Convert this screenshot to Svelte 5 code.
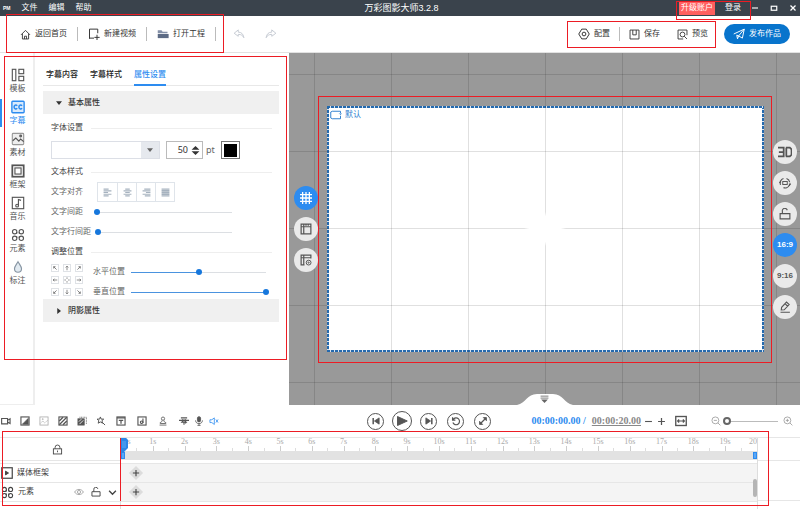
<script>
  const icons = {
    home: '<path d="M1.5 8.5 8 2l6.500 6.500M3.500 7v7.500h9V7M6.500 14.500V10.500h3v4"/>',
    create: '<path d="M8 13.500H2v-12h11V7M2 13.500v1M12 9v7M8.500 12.500h7"/>',
    folder: '<path d="M1 3h5l1.500 2H14v2H1z" fill="#8490a8" stroke="none"/><path d="M1 8h14.500v5.500H1z" fill="#5d6b85" stroke="none"/>',
    undo: '<path d="M7 2.500 1.500 7 7 11V8.500c4 0 6 1.500 7.500 4.500C14 8 11 5.500 7 5.500z"/>',
    redo: '<path d="M9 2.500 14.500 7 9 11V8.500c-4 0-6 1.500-7.500 4.500C2 8 5 5.500 9 5.500z"/>',
    gear: '<path d="M5 1.500h6L15 8l-4 6.500H5L1 8z"/><circle cx="8" cy="8" r="2.500"/>',
    save: '<path d="M1.500 1.500h13v13h-13zM5.500 1.500v7h5v-7"/>',
    preview: '<path d="M14.500 9V1.500h-13v13H9"/><circle cx="8" cy="8" r="3.500"/><path d="m10.500 10.500 4 4"/>',
    send: '<path d="M1 8 15 1.500 12.500 13.500 7.500 10.500 15 1.500M7.500 10.500 6 14.500 5 9.500z"/>',
    template: '<rect x="1.500" y="1.500" width="4" height="13"/><rect x="9" y="1.500" width="5.500" height="5"/><rect x="9" y="9.500" width="5.500" height="5"/>',
    caption: '<rect x="1" y="1.500" width="14" height="13" rx="1" fill="#d9eafc" stroke-width="1.600"/><path stroke-width="1.700" d="M7.200 6.500C5.500 5 3.500 6 3.500 8s2 3 3.700 1.500M12.700 6.500C11 5 9 6 9 8s2 3 3.700 1.500"/>',
    material: '<rect x="1.500" y="1.500" width="13" height="13" rx="1" fill="#eee" stroke="#999"/><path d="m2 10 3.500-3L9 10.500 11 8l3.500 3"/><circle cx="11" cy="4.500" r="1"/>',
    frame: '<rect x="1.500" y="1.500" width="13" height="13" stroke-width="2"/><rect x="4.500" y="4.500" width="7" height="7"/>',
    music: '<rect x="1.500" y="1.500" width="13" height="13"/><path d="M8.500 11V4l3 1"/><circle cx="7" cy="11" r="1.600"/>',
    element: '<circle cx="4.200" cy="4.200" r="2.500"/><circle cx="11.800" cy="4.200" r="2.500"/><circle cx="4.200" cy="11.800" r="2.500"/><circle cx="11.800" cy="11.800" r="2.500"/><path d="M6.500 4.500V6.700M9.500 4.500v2.200M6.500 11.500V9.300M9.500 11.500V9.300"/>',
    drop: '<path d="M8 2c2 3.500 4 5.500 4 8a4 4 0 0 1-8 0c0-2.500 2-4.500 4-8z" fill="#e1eaf1" stroke="#8795a3"/>',
    hash: '<path stroke-width="1.700" d="M3.500 0v16M8 0v16M12.500 0v16M0 3.500h16M0 8h16M0 12.500h16"/>',
    ruler: '<path stroke-width="1.600" d="M1.500 1.500h13v13h-13zM5 2v12M2 5h12M8 2v1.500M11 2v1.500"/>',
    rulerSet: '<path stroke-width="1.600" d="M14.500 6V1.500h-13v13H6M5 2v12M2 5h12"/><circle cx="11.500" cy="11.500" r="3.200"/><circle cx="11.500" cy="11.500" r=".8"/>',
    threeD: '<path stroke-width="2" d="M0 3h6.500v10H0M1 8h5.500M9.500 3v10M9 3h4.500L15.500 5v6l-2 2H9"/>',
    rotate: '<path stroke-width="1.500" d="M2 10.500A6.500 6.500 0 0 1 6 2M10 2a6.500 6.500 0 0 1 4.300 5M14 10.500A6.500 6.500 0 0 1 6 14.200M2 4.500V7H0M14 12V9.500h2"/><rect x="5" y="6" width="6" height="4"/>',
    unlock: '<path d="M1.500 7.500h13v7h-13zM4.500 7.500V4.500a3 3 0 0 1 6.500-1.500" stroke-width="1.500"/>',
    lock: '<rect x="2" y="7" width="12" height="7.500"/><path d="M4.500 7V5a3.500 3.500 0 0 1 7 0v2M8 9.500v2.500"/>',
    pen: '<path stroke-width="1.500" d="m3 12 .5-3.500 6.500-7 3.500 3.200-6.500 7zM8 3.500 11.500 7M2 15h12.500"/>',
    camera: '<path stroke-width="1.800" d="M1 4h9.500v8.500H1zM10.500 7l4-2.500v7.500l-4-2.500"/>',
    mask: '<rect x="1.500" y="1.500" width="13" height="13" stroke-width="1.800"/><path d="M13 4v9H4z" fill="currentColor"/>',
    picture: '<rect x="1.500" y="1.500" width="13" height="13"/><path stroke-dasharray="2 1" d="m2 12 4-4 3 3 5-4"/><circle cx="6" cy="5" r=".8"/>',
    stripes: '<rect x="1.500" y="1.500" width="13" height="13" stroke-width="1.800"/><path stroke-width="2" d="M2 8 8 2M2 14 14 2M8 14l6-6"/>',
    stack: '<rect x="1.500" y="4.500" width="10" height="10" fill="currentColor"/><path d="M4 2h11v11" stroke-dasharray="1.500 1"/><path stroke="#fff" d="M3 9 7 5M4 13l6-6"/>',
    star: '<path d="M7 1.500 8.300 5h4L9.500 7.500l1 4L7 9.500l-3.500 2 1-4L1.700 5h4zM10.500 10.500l4 4" stroke-width="1.600"/>',
    text: '<rect x="1.500" y="1.500" width="13" height="13" stroke-width="1.800"/><path stroke-width="2" d="M1.500 3h13M4.500 7h7M8 7v5.500"/>',
    note: '<rect x="1.500" y="1.500" width="13" height="13" stroke-width="1.800"/><path stroke-width="1.800" d="M9.500 11V4"/><circle cx="7.500" cy="10" r="2" stroke-width="1.800"/>',
    person: '<circle cx="8" cy="4.200" r="2.600"/><path d="M6.500 7c0 2-1 3-3 3.500v1.500h9v-1.500c-2-.5-3-1.500-3-3.500M2.500 14.500h11"/>',
    wave: '<path stroke-width="1.800" d="M0 7h16M3 3h10M5.500 5v5M8 5v9M10.500 5v7M3 10h10"/>',
    mic: '<rect x="5.500" y="1" width="5" height="8.500" rx="2.500" fill="currentColor"/><path d="M2.500 7c0 7 11 7 11 0M8 12v3M5.500 15h5"/>',
    mute: '<path d="M1.500 6h3L8.500 3v10.500L4.500 10.500h-3zM11 5.500l3.500 5M14.500 5.500l-3.500 5"/>',
    prev: '<path stroke-width="2.400" d="M3.500 3v10"/><path d="M13 3v10L5.500 8z" fill="currentColor"/>',
    play: '<path d="M2 2v12L15 8z" fill="currentColor"/>',
    next: '<path stroke-width="2.400" d="M12.500 3v10"/><path d="M3 3v10L10.500 8z" fill="currentColor"/>',
    replay: '<path stroke-width="1.900" d="M3.500 5.500a5.500 5.500 0 1 1-.5 5M2.500 2v4.500H7"/>',
    expand: '<path stroke-width="2" d="m4 12 8-8"/><path d="M8.500 2.500h5v5zM2.500 8.500v5h5z" fill="currentColor"/>',
    fit: '<rect x="1" y="2" width="14" height="12" stroke-width="1.800"/><path stroke-width="1.600" d="M3.500 8h9M5.500 6l-2 2 2 2M10.500 6l2 2-2 2"/>',
    minus: '<path stroke-width="1.600" d="M3 8h10"/>',
    plus: '<path stroke-width="1.800" d="M3 8h10M8 3v10"/>',
    zoomOut: '<circle cx="7" cy="7" r="5.500"/><path d="M4.500 7h5M11 11l4 4"/>',
    zoomIn: '<circle cx="7" cy="7" r="5.500"/><path d="M4.500 7h5M7 4.500v5M11 11l4 4"/>',
    media: '<rect x="1" y="1" width="14" height="14" stroke-width="1.600"/><path d="M6 5.500v5l4-2.500z" fill="currentColor"/>',
    eye: '<path d="M1 8c3-5.500 11-5.500 14 0-3 5.500-11 5.500-14 0z"/><circle cx="8" cy="8" r="2.500"/>',
    chevron: '<path stroke-width="2.400" d="m2 5 6 6 6-6"/>',
    minimize: '<path stroke-width="2.200" d="M2 8h12"/>',
    maximize: '<rect x="2.500" y="4.500" width="11" height="8" stroke-width="2.400"/>',
    close: '<path stroke-width="2.600" d="m3 3 10 10M13 3 3 13"/>',
    triDown: '<path d="M2 4.500h12L8 12z" fill="currentColor" stroke="none"/>',
    triRight: '<path d="M4.500 2v12L12 8z" fill="currentColor" stroke="none"/>',
    spin: '<path d="M1 6.500 8 0l7 6.500zM1 9.500 8 16l7-6.500z" fill="currentColor" stroke="none"/>',
    card: '<path d="M3 3h11v3M14 9v4H3l-2-1V4l2-1"/><path d="m12.500 6 1.500 1.500L15.500 6"/>',
    drawer: '<path d="M1 2h14M1 5.500h14" stroke-width="1.500"/><path d="M2 8h12l-6 6z" fill="currentColor" stroke="none"/>',
    alignLeft: '<path stroke-width="2" d="M1 2h9M1 5h14M1 8h8M1 11h14M1 14h9"/>',
    alignCenter: '<path stroke-width="2" d="M4 2h8M1 5h14M4 8h8M1 11h14M4 14h8"/>',
    alignRight: '<path stroke-width="2" d="M4 2h11M1 5h14M7 8h8M1 11h14M5 14h10"/>',
    alignFull: '<path stroke-width="2.600" d="M1 2h14M1 5h14M1 8h14M1 11h14M1 14h14"/>',
    arrow: '<path stroke-width="2" d="M8 14V3M4.500 6.500 8 3l3.500 3.500"/>',
    center: '<path stroke-width="2" d="M8 1v4M8 11v4M1 8h4M11 8h4"/>'
  };

  const nav = [
    ['template', '模板'], ['caption', '字幕'], ['material', '素材'], ['frame', '框架'],
    ['music', '音乐'], ['element', '元素'], ['drop', '标注']
  ];
  const tools = ['camera', 'mask', 'picture', 'stripes', 'stack', 'star', 'text', 'note', 'person', 'wave', 'mic', 'mute'];
  const playback = [['prev', '上一帧'], ['play', '播放'], ['next', '下一帧'], ['replay', '重播'], ['expand', '全屏']];
  const viewTools = ['threeD', 'rotate', 'unlock', '16:9', '9:16', 'pen'];
  const directions = [-45, 0, 45, -90, null, 90, -135, 180, 135];
  const seconds = Array.from({ length: 21 }, (_, i) => (i < 20 ? `${i}s` : '20'));

  let fontSize = $state(50);
  let spacing = $state(0);
  let lineSpacing = $state(1);
  let horizontal = $state(50);
  let vertical = $state(100);
  let zoom = $state(0);
  let ratio = $state('16:9');
</script>

{#snippet icon(name, size = 12)}
  <svg width={size} height={size} viewBox="0 0 16 16" fill="none" stroke="currentColor" stroke-width="1.300" aria-hidden="true">{@html icons[name]}</svg>
{/snippet}

<div class="app">
  <header class="titlebar">
    <nav class="menu">
      <span class="logo">PM</span>
      <button>文件</button><button>编辑</button><button>帮助</button>
    </nav>
    <h1>万彩图影大师3.2.8</h1>
    <div class="window">
      <div class="account">
        <button class="upgrade">升级账户</button>
        <button class="login">登录</button>
        <span class="mark"></span>
      </div>
      <div class="winbtns">
        <button aria-label="最小化">{@render icon('minimize', 8)}</button>
        <button aria-label="最大化">{@render icon('maximize', 8)}</button>
        <button aria-label="关闭">{@render icon('close', 8)}</button>
      </div>
    </div>
  </header>

  <div class="toolbar">
    <div class="project">
      <button>{@render icon('home', 11)}返回首页</button><i></i>
      <button>{@render icon('create')}新建视频</button><i></i>
      <button>{@render icon('folder')}打开工程</button><i></i>
      <span class="mark"></span>
    </div>
    <div class="history">
      <button aria-label="撤销">{@render icon('undo')}</button>
      <button aria-label="重做">{@render icon('redo')}</button>
    </div>
    <div class="output">
      <button>{@render icon('gear')}配置</button><i></i>
      <button>{@render icon('save', 11)}保存</button>
      <button class="preview">{@render icon('preview', 11)}预览</button>
      <span class="mark"></span>
    </div>
    <button class="publish">{@render icon('send')}发布作品</button>
  </div>

  <main>
    <div class="side">
      <nav class="rail">
        {#each nav as [name, label]}
          <button class:active={name === 'caption'}>{@render icon(name, 14)}<span>{label}</span></button>
        {/each}
      </nav>
      <section class="panel">
        <div class="tabs">
          <button>字幕内容</button><button>字幕样式</button><button class="active">属性设置</button>
        </div>
        <button class="fold">{@render icon('triDown', 8)}基本属性</button>
        <div class="fields">
          <h2>字体设置</h2>
          <div class="font-row">
            <div class="picker">
              <select aria-label="字体"><option></option></select>
              <span>{@render icon('triDown', 8)}</span>
            </div>
            <div class="size">
              <input id="size" type="number" bind:value={fontSize} />
              {@render icon('spin', 9)}
            </div>
            <label class="unit" for="size">pt</label>
            <button class="swatch" aria-label="颜色"><span></span></button>
          </div>
          <h2>文本样式</h2>
          <div class="row">
            <span class="name">文字对齐</span>
            <div class="aligns">
              {#each [['alignLeft', '左对齐'], ['alignCenter', '居中'], ['alignRight', '右对齐'], ['alignFull', '两端对齐']] as [name, label]}
                <button aria-label={label}>{@render icon(name, 9)}</button>
              {/each}
            </div>
          </div>
          <div class="row">
            <label class="name" for="spacing">文字间距</label>
            <input id="spacing" type="range" bind:value={spacing} style="--fill: {spacing}%" />
          </div>
          <div class="row">
            <label class="name" for="line">文字行间距</label>
            <input id="line" type="range" bind:value={lineSpacing} style="--fill: {lineSpacing}%" />
          </div>
          <h2>调整位置</h2>
          <div class="position">
            <div class="pad">
              {#each directions as angle}
                <button aria-label="位置">
                  {#if angle === null}
                    {@render icon('center', 6)}
                  {:else}
                    <span style="transform: rotate({angle}deg)">{@render icon('arrow', 6)}</span>
                  {/if}
                </button>
              {/each}
            </div>
            <div class="axes">
              <div class="row"><label for="x">水平位置</label><input id="x" type="range" bind:value={horizontal} style="--fill: {horizontal}%" /></div>
              <div class="row"><label for="y">垂直位置</label><input id="y" type="range" bind:value={vertical} style="--fill: {vertical}%" /></div>
            </div>
          </div>
        </div>
        <button class="fold">{@render icon('triRight', 8)}阴影属性</button>
      </section>
      <span class="mark"></span>
    </div>

    <section class="workspace">
      <div class="dock">
        <button class="round active" aria-label="网格">{@render icon('hash')}</button>
        <button class="round" aria-label="标尺">{@render icon('ruler')}</button>
        <button class="round" aria-label="标尺设置">{@render icon('rulerSet')}</button>
      </div>
      <div class="stage">
        <div class="tag">{@render icon('card')}默认</div>
        <span class="mark"></span>
      </div>
      <div class="dock">
        {#each viewTools as tool}
          {#if tool.includes(':')}
            <button class="round" class:active={ratio === tool} onclick={() => (ratio = tool)}>{tool}</button>
          {:else}
            <button class="round" aria-label={tool}>{@render icon(tool, tool === 'threeD' ? 14 : 12)}</button>
          {/if}
        {/each}
      </div>
      <div class="grid"></div>
      <div class="glow"></div>
      <button class="drawer" aria-label="收起">
        <svg width="56" height="11" viewBox="0 0 56 11" aria-hidden="true"><path d="M0 11C9 9 10 0 20 0h16c10 0 11 9 20 11z" fill="#fff" /></svg>
        <span>{@render icon('drawer', 9)}</span>
      </button>
    </section>
  </main>

  <div class="controls">
    <div class="tools">
      {#each tools as tool}
        <button class={tool} aria-label={tool}>{@render icon(tool, 10)}</button>
      {/each}
    </div>
    <div class="playback">
      {#each playback as [name, label]}
        <button class={name} aria-label={label}>{@render icon(name, name === 'play' ? 12 : 10)}</button>
      {/each}
    </div>
    <div class="time"><b>00:00:00.00 /</b><u>00:00:20.00</u></div>
    <div class="zoom">
      <button aria-label="减少">{@render icon('minus', 11)}</button>
      <button aria-label="增加">{@render icon('plus', 11)}</button>
      <button class="fit" aria-label="适应">{@render icon('fit')}</button>
      <button class="soft" aria-label="缩小">{@render icon('zoomOut', 10)}</button>
      <input type="range" aria-label="缩放" bind:value={zoom} style="--fill: {zoom}%" />
      <button class="soft" aria-label="放大">{@render icon('zoomIn', 10)}</button>
    </div>
  </div>

  <section class="timeline">
    <div class="heads">
      <div class="lock">{@render icon('lock', 11)}</div>
      <div class="track">{@render icon('media')}<span>媒体框架</span></div>
      <div class="track">
        {@render icon('element', 13)}<span>元素</span>
        <button class="soft" aria-label="显示">{@render icon('eye', 10)}</button>
        <button aria-label="解锁">{@render icon('unlock', 10)}</button>
        <button aria-label="展开">{@render icon('chevron', 9)}</button>
      </div>
    </div>
    <div class="lanes">
      <div class="ruler">
        {#each seconds as s}
          <div class="second"><span>{s}</span></div>
        {/each}
      </div>
      <div class="span"><i></i><i></i></div>
      <div class="lane"><button aria-label="添加"><span></span>{@render icon('plus', 10)}</button></div>
      <div class="lane"><button aria-label="添加"><span></span>{@render icon('plus', 10)}</button></div>
      <div class="playhead">
        <svg width="7" height="15" viewBox="0 0 7 15" aria-hidden="true"><path d="M0 0h5l2 2v8l-5 5H0z" fill="#2c86e6" /><path d="M2 3v7M4 3v7" stroke="#5da8f2" /></svg>
      </div>
      <div class="scroll"></div>
    </div>
    <div class="rest"></div>
    <span class="mark"></span>
  </section>
</div>

<style>
  :global(body) { margin: 0; }
  .app {
    display: flex;
    flex-direction: column;
    min-height: 100vh;
    background: #fff;
    color: #333;
    font: 8px/12px "Liberation Sans", "Noto Sans CJK SC", sans-serif;
    overflow: hidden;
  }
  .app :global(*) { box-sizing: border-box; }
  svg { display: block; flex: none; }
  button {
    display: flex;
    align-items: center;
    justify-content: center;
    padding: 0;
    border: 0;
    background: none;
    color: inherit;
    font: inherit;
    white-space: nowrap;
  }
  .mark {
    position: absolute;
    inset: 0;
    z-index: 5;
    border: 1px solid #ec1c24;
    pointer-events: none;
  }

  .titlebar {
    display: grid;
    grid-template-columns: 1fr auto 1fr;
    align-items: center;
    height: 16px;
    padding-left: 3px;
    background: #3a434c;
    color: #fff;
  }
  .menu { display: flex; gap: 11px; }
  .logo { font-size: 5px; font-weight: 700; }
  h1 { margin: 0; font: inherit; font-size: 9px; }
  .window { display: flex; justify-content: flex-end; height: 16px; }
  .account { position: relative; display: flex; align-items: center; padding: 0 10px 0 3px; gap: 10px; }
  .account .mark { inset: 1px 0 -4px 0; }
  .upgrade { height: 14px; padding: 0 2px; background: #ff5f5f; }
  .winbtns { display: flex; gap: 11px; padding-right: 3px; }

  .toolbar {
    display: flex;
    align-items: center;
    height: 37px;
    border-bottom: 1px solid #e2e2e2;
  }
  .toolbar button { gap: 4px; }
  .toolbar i { width: 1px; height: 14px; background: #bbb; }
  .project, .output { position: relative; display: flex; align-items: center; gap: 10px; }
  .project { padding-left: 20px; }
  .project .mark { inset: -13px -8px -12px 6px; }
  .history { display: flex; gap: 20px; padding-left: 17px; color: #c5cbd3; }
  .output { margin-left: auto; gap: 9px; padding: 0 8px 0 11px; }
  .output .mark { inset: -6px 0 -7px 0; }
  .preview { margin-left: 8px; }
  .toolbar .publish {
    height: 20px;
    margin: 0 10px 0 8px;
    padding: 0 9px;
    gap: 4px;
    border-radius: 10px;
    background: #0874cc;
    color: #fff;
  }

  main { display: flex; flex: 1; min-height: 352px; }
  .side { position: relative; display: flex; width: 289px; flex: none; }
  .side .mark { inset: 3px 2px 45px 4px; }
  .rail {
    display: flex;
    flex-direction: column;
    width: 35px;
    padding-top: 14px;
    gap: 4px;
    border-right: 2px solid #eee;
    border-bottom: 1px solid #eee;
  }
  .rail button {
    flex-direction: column;
    height: 28px;
    gap: 1px;
    padding-left: 2px;
    border-left: 0 solid #2d8cf0;
    color: #555;
  }
  .rail .active { padding: 0; border-left-width: 2px; color: #2d8cf0; }

  .panel { flex: 1; padding: 15px 10px 0 8px; }
  .tabs {
    display: flex;
    gap: 12px;
    height: 18px;
    margin-bottom: 5px;
    padding-left: 3px;
    border-bottom: 1px solid #e8e8e8;
  }
  .tabs button { height: 18px; padding-bottom: 3px; border-bottom: 2px solid transparent; color: #222; }
  .tabs .active { border-color: #2d8cf0; color: #2d8cf0; }
  .tabs, .fold { font-weight: 500; }
  .fold {
    justify-content: flex-start;
    width: 100%;
    height: 23px;
    gap: 5px;
    padding-left: 12px;
    background: #f0f0f0;
  }
  .fields { padding: 8px 7px 0 8px; color: #666; }
  h2 {
    display: flex;
    align-items: center;
    height: 12px;
    margin: 0;
    gap: 8px;
    color: #444;
    font: inherit;
  }
  h2::after { content: ""; flex: 1; height: 1px; background: #eee; }
  .font-row { display: flex; align-items: center; height: 32px; }
  .picker { display: flex; width: 109px; height: 18px; margin-right: 6px; border: 1px solid #dcdfe6; }
  .picker select { flex: 1; min-width: 0; border: 0; background: #fff; appearance: none; font: inherit; }
  .picker span { display: grid; place-items: center; width: 18px; background: #e6e9ee; }
  .size {
    display: flex;
    align-items: center;
    width: 37px;
    height: 18px;
    margin-right: 3px;
    padding-right: 2px;
    border: 1px solid #bbb;
    color: #333;
  }
  .size input {
    width: 24px;
    margin-right: auto;
    padding: 0 3px 0 0;
    border: 0;
    background: none;
    color: inherit;
    font: 9px/12px "Noto Sans", sans-serif;
    text-align: right;
    appearance: textfield;
  }
  .size input::-webkit-inner-spin-button { appearance: none; display: none; }
  .unit { width: 13px; margin-right: 2px; font: 9px/12px "Noto Sans", sans-serif; }
  .swatch { width: 19px; height: 18px; border: 1px solid #777; }
  .swatch span { width: 13px; height: 13px; background: #000; }
  .row { display: flex; align-items: center; height: 20px; }
  .name { width: 43px; flex: none; }
  .aligns { display: flex; height: 20px; margin-left: 3px; border: 1px solid #dfe4ea; color: #a6b2bf; }
  .aligns button { width: 19px; }
  .aligns button + button { border-left: 1px solid #dfe4ea; }
  h2 + .row { margin-top: 4px; }
  .row + h2 { margin-top: 4px; }

  input[type="range"] {
    --line: #dcdfe3;
    width: 141px;
    height: 12px;
    margin: 0;
    appearance: none;
    background: linear-gradient(90deg, #4a93df var(--fill), var(--line) var(--fill)) center / calc(100% - 6px) 1px no-repeat;
  }
  input[type="range"]::-webkit-slider-thumb {
    width: 6px;
    height: 6px;
    appearance: none;
    border-radius: 50%;
    background: #1677dc;
  }
  .position { display: flex; height: 41px; padding-top: 4px; }
  .pad {
    display: grid;
    grid-template-columns: repeat(3, 8px);
    gap: 4px;
    align-content: start;
    padding-top: 2px;
  }
  .pad button { width: 8px; height: 8px; border: 1px solid #dfe2e6; }
  .axes { padding-left: 10px; }
  .axes label { width: 35px; }

  .workspace {
    position: relative;
    display: flex;
    flex: 1;
    align-items: center;
    gap: 9px;
    padding: 0 3px 0 5px;
    background: #999;
  }
  .dock { z-index: 3; display: flex; flex-direction: column; gap: 7px; }
  .round {
    width: 24px;
    height: 24px;
    border-radius: 50%;
    background: #eaeaea;
    color: #555;
    font-weight: 700;
  }
  .round.active { background: #2d8cf0; color: #fff; }
  .stage {
    position: relative;
    flex: 1;
    aspect-ratio: 16 / 9;
    background:
      repeating-linear-gradient(90deg, #2469ad 0 3px, #dbe4ee 3px 4px) top / 100% 2px no-repeat,
      repeating-linear-gradient(90deg, #2469ad 0 3px, #dbe4ee 3px 4px) bottom / 100% 2px no-repeat,
      repeating-linear-gradient(#2469ad 0 3px, #dbe4ee 3px 4px) left / 2px 100% no-repeat,
      repeating-linear-gradient(#2469ad 0 3px, #dbe4ee 3px 4px) right / 2px 100% no-repeat,
      #fff;
  }
  .stage .mark { inset: -10px -8px -11px -9px; }
  .tag { display: flex; align-items: center; gap: 3px; padding: 3px; color: #2f7fd0; }
  .grid {
    position: absolute;
    inset: 0;
    background:
      linear-gradient(90deg, rgba(0, 0, 0, .12) 1px, transparent 1px) 25px 0 / 77px 77px,
      linear-gradient(rgba(0, 0, 0, .12) 1px, transparent 1px) 0 21px / 77px 77px;
    pointer-events: none;
  }
  .glow {
    position: absolute;
    top: 50%;
    left: 50%;
    width: 42px;
    height: 34px;
    margin: -17px -21px;
    background: radial-gradient(closest-side, #fff 75%, transparent);
    pointer-events: none;
  }
  .drawer { position: absolute; z-index: 3; bottom: 0; left: calc(50% - 28px); }
  .drawer span { position: absolute; color: #666; }

  .controls { display: flex; align-items: center; height: 32px; color: #555; }
  .tools { display: flex; gap: 9px; padding-left: 1px; }
  .tools .text, .tools .note, .tools .person, .tools .wave { width: 12px; }
  .tools .picture { color: #aaa; }
  .tools .mic { margin-right: -4px; margin-left: -5px; }
  .tools .mute { color: #2d8cf0; }
  .playback { display: flex; align-items: center; gap: 10px; margin-left: auto; padding-right: 40px; }
  .playback button { width: 17px; height: 17px; border: 1px solid #555; border-radius: 50%; }
  .playback .play { width: 20px; height: 20px; margin: 0 -2px; }
  .time { display: flex; gap: 6px; font: 10px/14px "Liberation Serif", serif; }
  .time b { color: #2d8cf0; }
  .time u { color: #888; font-weight: 700; }
  .zoom { display: flex; align-items: center; gap: 2px; padding: 0 7px 0 2px; }
  .zoom .fit { margin: 0 22px 0 6px; }
  .soft { color: #999; }
  .zoom input[type="range"] { --line: #bbb; width: 58px; }
  .zoom input[type="range"]::-webkit-slider-thumb { width: 8px; height: 8px; border: 2px solid #666; background: #fff; }

  .timeline { position: relative; display: flex; min-height: 72px; border-top: 1px solid #e6e6e6; }
  .timeline .mark { inset: -7px 31px 3px 2px; }
  .heads { width: 121px; flex: none; border-right: 1px solid #ddd; color: #444; }
  .lock { display: grid; place-items: center; height: 23px; padding-right: 6px; border-bottom: 1px solid #e6e6e6; }
  .track { display: flex; align-items: center; height: 19px; gap: 4px; padding-left: 1px; border-bottom: 1px solid #e6e6e6; }
  .lock + .track { height: 20px; margin-top: 2px; border-top: 1px solid #e6e6e6; }
  .track button { margin-left: 3px; }
  .track .soft { margin-left: auto; }
  .track button:last-child { margin-right: 3px; }
  .lanes { position: relative; flex: 1; min-width: 0; border-right: 1px solid #ddd; }
  .ruler { display: flex; height: 13px; overflow: hidden; color: #aaa; font: 8px/8px "Liberation Serif", serif; }
  .second {
    flex: 0 0 5%;
    background:
      linear-gradient(#ccc, #ccc) 0 100% / 1px 5px no-repeat,
      linear-gradient(#ddd, #ddd) 50% 100% / 1px 3px no-repeat;
  }
  .second span { display: block; width: 20px; margin-left: -10px; text-align: center; }
  .second:first-child span { margin-left: -4px; }
  .second:last-child span { width: 8px; margin-left: -8px; }
  .span { display: flex; justify-content: space-between; height: 9px; background: #e2e2e2; }
  .span i { width: 4px; height: 7px; margin-top: 1px; border: 1px solid #2d8cf0; background: #5ba6f5; }
  .lane { display: flex; align-items: center; height: 19px; padding-left: 8px; border-bottom: 1px solid #e6e6e6; background: #f4f4f4; }
  .span + .lane { height: 20px; margin-top: 3px; border-top: 1px solid #e6e6e6; }
  .lane button { position: relative; width: 14px; height: 14px; color: #444; }
  .lane span { position: absolute; inset: 2px; background: #dcdcdc; transform: rotate(45deg); }
  .lane svg { position: relative; }
  .playhead { position: absolute; top: 0; left: -1px; height: 63px; border-left: 1px solid #ec1c24; }
  .scroll { position: absolute; top: 41px; right: 0; width: 4px; height: 18px; border-radius: 2px; background: #b5b5b5; }
  .rest { width: 42px; margin-bottom: 8px; border-bottom: 1px solid #e6e6e6; background: linear-gradient(#e6e6e6, #e6e6e6) 0 22px / 100% 1px no-repeat; }
</style>
